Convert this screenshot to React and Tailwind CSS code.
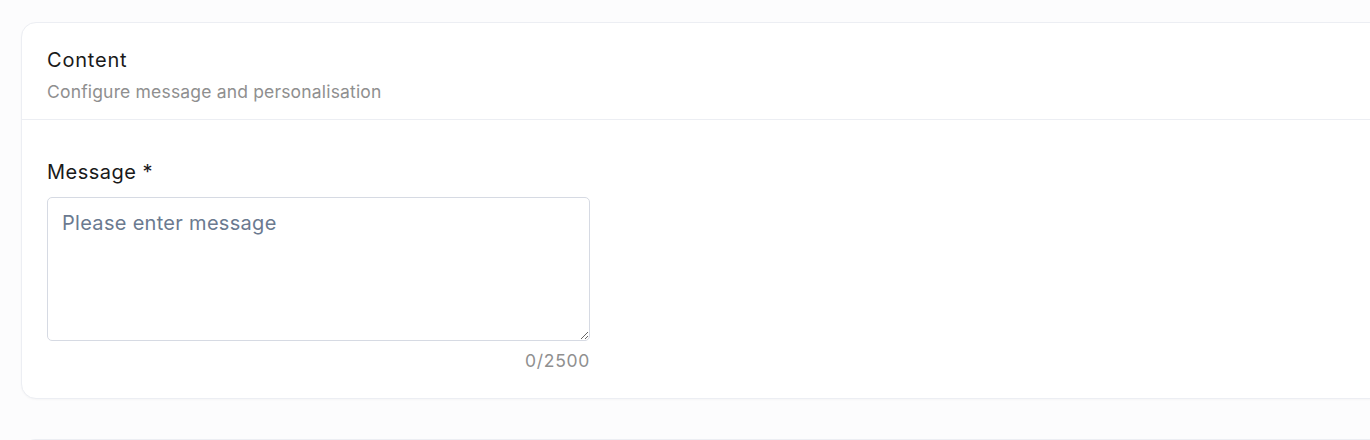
import { useState } from 'react';

const MAX = 2500;

export default function App() {
  const [message, setMessage] = useState('');

  return (
    <div className="h-[440px] w-full overflow-hidden bg-[#fcfcfd] pt-[22px] pl-[21px] font-['Inter',sans-serif]">
      <div className="w-[1380px] rounded-[15px] border border-[#eceef3] bg-white shadow-[0_1px_2px_rgba(16,24,40,0.03)]">
        {/* Header */}
        <div className="border-b border-[#eceef3] px-[25px] pt-[22px] pb-[14px]">
          <h2 className="text-[20px] leading-[30px] font-normal tracking-[0.04em] text-[#1a1a1a]">Content</h2>
          <p className="mt-[4px] text-[17.5px] leading-[26px] tracking-[0.01em] text-[#8f8f8f]">
            Configure message and personalisation
          </p>
        </div>

        {/* Body */}
        <div className="px-[25px] pt-[37px] pb-[24px]">
          <label htmlFor="message" className="block text-[20px] leading-[30px] tracking-[0.025em] text-[#1a1a1a]">
            Message *
          </label>
          <div className="mt-[10px] w-[543px]">
            <textarea
              id="message"
              value={message}
              maxLength={MAX}
              onChange={(e) => setMessage(e.target.value)}
              placeholder="Please enter message"
              className="block h-[144px] w-full rounded-[5px] border border-[#d6dae3] bg-white px-[14px] py-[10px] text-[20px] leading-[30px] tracking-[0.015em] text-[#1a1a1a] outline-none placeholder:text-[#6b7a90] focus:border-[#9aa3b5]"
            />
            <p className="mt-[7px] text-right text-[17.5px] leading-[26px] tracking-[0.04em] text-[#8f8f8f]">
              {message.length}/{MAX}
            </p>
          </div>
        </div>
      </div>

      <div className="mt-[40px] h-[40px] w-[1380px] rounded-t-[15px] border border-b-0 border-[#eceef3] bg-white" />
    </div>
  );
}
